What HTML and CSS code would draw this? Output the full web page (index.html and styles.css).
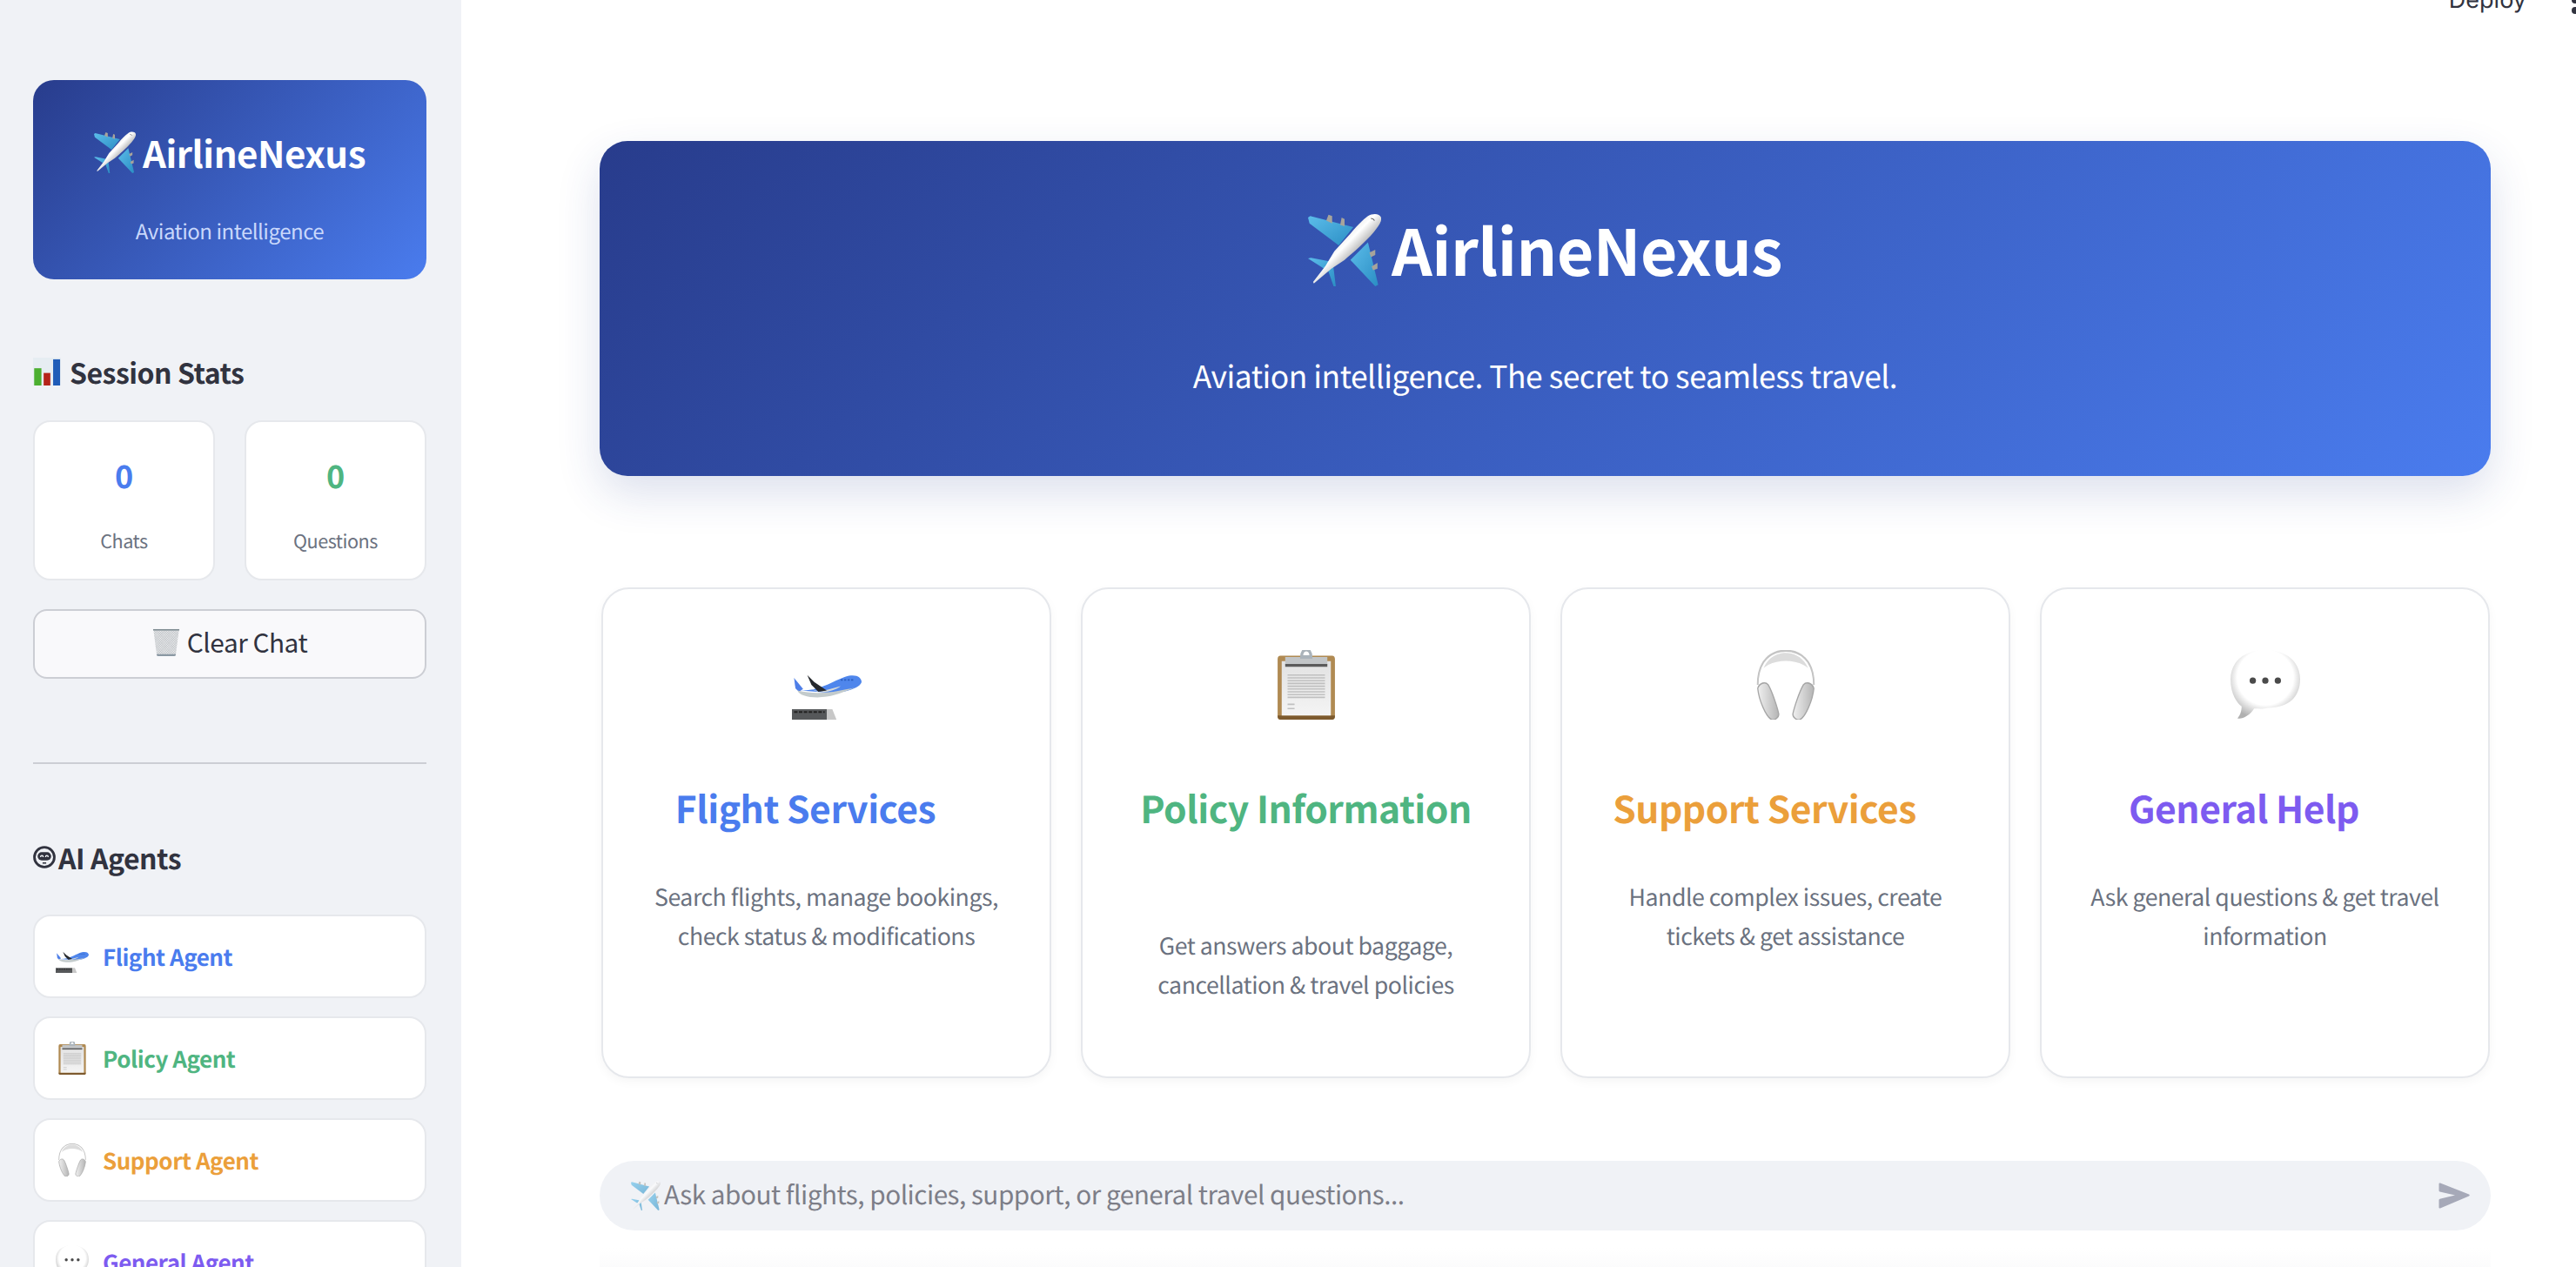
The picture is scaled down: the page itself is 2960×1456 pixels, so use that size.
FILE: index.html
```html
<!DOCTYPE html>
<html lang="en">
<head>
    <meta charset="UTF-8">
    <title>AirlineNexus</title>
    <link rel="stylesheet" href="styles.css">
</head>
<body>
    <!-- emoji drawings, reused below -->
    <svg class="defs" aria-hidden="true">
        <defs>
            <linearGradient id="silver" x1="0.3" y1="0.3" x2="0.7" y2="0.7">
                <stop offset="0" stop-color="#d8d8d8"/>
                <stop offset="0.4" stop-color="#ffffff"/>
                <stop offset="1" stop-color="#808080"/>
            </linearGradient>
            <linearGradient id="wing" x1="0" y1="0" x2="1" y2="1">
                <stop offset="0" stop-color="#5cbdea"/>
                <stop offset="1" stop-color="#2b8ec4"/>
            </linearGradient>
            <linearGradient id="ear" x1="0" y1="0" x2="1" y2="0">
                <stop offset="0" stop-color="#f0f0f0"/>
                <stop offset="1" stop-color="#b4b4b4"/>
            </linearGradient>
            <linearGradient id="paper" x1="0" y1="0" x2="0" y2="1">
                <stop offset="0" stop-color="#e2e2e2"/>
                <stop offset="1" stop-color="#f4f4f4"/>
            </linearGradient>
            <radialGradient id="bubble" cx="0.5" cy="0.4" r="0.62">
                <stop offset="0.65" stop-color="#ffffff"/>
                <stop offset="1" stop-color="#b0b0b0"/>
            </radialGradient>
            <pattern id="mesh" width="6" height="6" patternUnits="userSpaceOnUse" patternTransform="rotate(45)">
                <path d="M0 0H6M0 0V6" stroke="#8f959c" stroke-width="2" fill="none"/>
            </pattern>
        </defs>
        <symbol id="plane" viewBox="0 0 100 100">
            <path d="M0 6 3 4 62 19 42 44 2 14z" fill="url(#wing)"/>
            <path d="M82 40 96 98 92 100 58 64z" fill="url(#wing)"/>
            <path d="M0 62 4 61 30 66 22 76zM26 74 34 68 38 100 35 100z" fill="url(#wing)"/>
            <path d="M25 10 28 2 33 4 33 14zM44 16 46 6 50 8 50 18zM84 54 92 50 92 57 86 60zM87 73 95 68 95 76 89 78z" fill="#a7a49b"/>
            <path d="M100 6C98 0 88 0 82 4 74 10 66 18 58 28L36 52 24 72 7 94 8 96 32 76 50 64C62 54 78 40 90 26 96 18 101 12 100 6z" fill="url(#silver)"/>
            <path d="M86 7c2 0 4 1 5 3" stroke="#555" stroke-width="1.2" fill="none"/>
        </symbol>
        <symbol id="chart" viewBox="0 0 100 100">
            <path d="M0 0h100v100H0z" fill="#e6edf2"/>
            <path d="M4 38h26v62H4z" fill="#4caf30"/>
            <path d="M38 55h24v45H38z" fill="#b5241a"/>
            <path d="M72 6h25v94H72z" fill="#1f5cb8"/>
        </symbol>
        <symbol id="trash" viewBox="0 0 100 100">
            <path d="M4 5h92L84 96c-1 3-3 4-6 4H22c-3 0-5-1-6-4z" fill="#f2f3f4"/>
            <path d="M4 5h92L84 96c-1 3-3 4-6 4H22c-3 0-5-1-6-4z" fill="url(#mesh)"/>
            <path d="M3 3h94v5H3z" fill="#7f8c92"/>
            <path d="M15 93h70l-1 4c-1 2-3 3-6 3H22c-3 0-5-1-6-3z" fill="#8a98a3"/>
        </symbol>
        <symbol id="robot" viewBox="0 0 100 100">
            <circle cx="50" cy="50" r="44" fill="none" stroke="#31333f" stroke-width="11"/>
            <rect x="20" y="28" width="60" height="36" rx="18" fill="#31333f"/>
            <path d="M33 50c0-9 12-9 12 0M55 50c0-9 12-9 12 0" fill="none" stroke="#f0f2f6" stroke-width="5"/>
            <path d="M42 76h16" stroke="#31333f" stroke-width="6"/>
        </symbol>
        <symbol id="landing" viewBox="0 0 100 100">
            <path d="M3 40 16 56 10 60 5 55z" fill="#4f7fe8"/>
            <path d="M12 58C40 60 62 42 82 37 94 35 100 40 100 46 98 54 80 60 60 62z" fill="#4f86ec"/>
            <path d="M8 58C10 66 30 70 50 67 66 64 80 58 90 54 70 58 40 66 8 58z" fill="#c3cbcc"/>
            <path d="M28 56C40 64 60 60 70 52L40 60z" fill="#d4d8d8"/>
            <path d="M22 36 32 46 50 58 38 60 28 50z" fill="#26292d"/>
            <path d="M70 43h20" stroke="#2c5fc0" stroke-width="2" stroke-dasharray="3 2"/>
            <path d="M0 85h50v15H0z" fill="#56585a"/>
            <path d="M50 85h8l6 15H50z" fill="#c8c8c8"/>
            <path d="M3 89h44" stroke="#222" stroke-width="2.5" stroke-dasharray="5 2"/>
        </symbol>
        <symbol id="clipboard" viewBox="0 0 100 100">
            <g transform="translate(8 0) scale(.84 1)">
                <rect x="1" y="8" width="98" height="92" rx="5" fill="#b08a52"/>
                <path d="M1 94h98v1c0 3-2 5-5 5H6c-3 0-5-2-5-5z" fill="#7d5a2e"/>
                <path d="M8 16h84v78H8z" fill="url(#paper)"/>
                <path d="M18 36h64M18 40h64M18 44h64M18 48h64M18 52h64M18 56h64M18 60h64M18 64h64M18 68h64M18 78h12M18 84h12" stroke="#c0c0c0" stroke-width="2"/>
                <path d="M14 10h72v12H14z" fill="#c2c5c7"/>
                <path d="M14 20h72v4H14z" fill="#5b5b5b"/>
                <path d="M42 10c0-14 16-14 16 0z" fill="none" stroke="#aab3ba" stroke-width="5"/>
            </g>
        </symbol>
        <symbol id="headphones" viewBox="0 0 100 100">
            <g transform="translate(8 0) scale(.84 1)">
                <path d="M2 50C2 14 26 1 50 1s48 13 48 49" fill="none" stroke="#c4c4c4" stroke-width="3"/>
                <path d="M12 26C20 10 36 4 50 4s30 6 38 22C70 12 30 12 12 26z" fill="#dcdcdc"/>
                <path d="M2 55C5 47 15 45 20 50 28 62 36 84 38 92 38 98 30 101 26 100 16 96 4 72 2 55z" fill="url(#ear)" stroke="#a6a6a6" stroke-width="2"/>
                <path d="M98 55C95 47 85 45 80 50 72 62 64 84 62 92 62 98 70 101 74 100 84 96 96 72 98 55z" fill="url(#ear)" stroke="#a6a6a6" stroke-width="2"/>
            </g>
        </symbol>
        <symbol id="speech" viewBox="0 0 100 100">
            <path d="M50 0C18 0 0 18 0 42c0 22 10 35 16 39 0 6-2 13-6 17 6 2 18-4 24-14 6 0 12 1 20-1 30 0 46-16 46-41C100 18 82 0 50 0z" fill="url(#bubble)"/>
            <circle cx="32" cy="44" r="4.5" fill="#4a4a4a"/>
            <circle cx="50" cy="44" r="4.5" fill="#4a4a4a"/>
            <circle cx="68" cy="44" r="4.5" fill="#4a4a4a"/>
        </symbol>
    </svg>

    <div class="app">
        <!-- sidebar -->
        <aside class="sidebar">
            <div class="brand">
                <div class="brand-title"><svg class="brand-icon"><use href="#plane"/></svg>AirlineNexus</div>
                <p class="brand-sub">Aviation intelligence</p>
            </div>

            <h2 class="side-heading stats-heading"><svg class="chart-icon"><use href="#chart"/></svg>Session Stats</h2>
            <div class="stats">
                <div class="stat">
                    <div class="stat-num blue">0</div>
                    <div class="stat-label">Chats</div>
                </div>
                <div class="stat">
                    <div class="stat-num green">0</div>
                    <div class="stat-label">Questions</div>
                </div>
            </div>
            <button class="clear-btn"><svg class="trash-icon"><use href="#trash"/></svg>Clear Chat</button>

            <hr class="divider">

            <h2 class="side-heading agents-heading"><svg class="robot-icon"><use href="#robot"/></svg>AI Agents</h2>
            <div class="agents">
                <div class="agent blue"><svg class="agent-icon"><use href="#landing"/></svg>Flight Agent</div>
                <div class="agent green"><svg class="agent-icon"><use href="#clipboard"/></svg>Policy Agent</div>
                <div class="agent orange"><svg class="agent-icon"><use href="#headphones"/></svg>Support Agent</div>
                <div class="agent purple"><svg class="agent-icon"><use href="#speech"/></svg>General Agent</div>
            </div>
        </aside>

        <!-- main area -->
        <main class="main">
            <div class="topbar">
                <span class="deploy">Deploy</span>
                <span class="dots"><i></i><i></i><i></i></span>
            </div>

            <section class="hero">
                <h1 class="hero-title"><svg class="hero-icon"><use href="#plane"/></svg>AirlineNexus</h1>
                <p class="hero-sub">Aviation intelligence. The secret to seamless travel.</p>
            </section>

            <section class="cards">
                <div class="card">
                    <svg class="card-icon"><use href="#landing"/></svg>
                    <h3 class="card-title blue">Flight Services<span class="anchor"></span></h3>
                    <p class="card-text">Search flights, manage bookings, check status &amp; modifications</p>
                </div>
                <div class="card">
                    <svg class="card-icon"><use href="#clipboard"/></svg>
                    <h3 class="card-title green">Policy Information<span class="anchor"></span></h3>
                    <p class="card-text">Get answers about baggage, cancellation &amp; travel policies</p>
                </div>
                <div class="card">
                    <svg class="card-icon"><use href="#headphones"/></svg>
                    <h3 class="card-title orange">Support Services<span class="anchor"></span></h3>
                    <p class="card-text">Handle complex issues, create tickets &amp; get assistance</p>
                </div>
                <div class="card">
                    <svg class="card-icon"><use href="#speech"/></svg>
                    <h3 class="card-title purple">General Help<span class="anchor"></span></h3>
                    <p class="card-text">Ask general questions &amp; get travel information</p>
                </div>
            </section>

            <div class="chat-input">
                <svg class="input-icon"><use href="#plane"/></svg>
                <span class="placeholder">Ask about flights, policies, support, or general travel questions...</span>
                <svg class="send-icon" viewBox="0 0 36 32"><path d="M2 1.500 35 14.500c1 .6 1 1.400 0 2L2 30.500c-.8.300-1.500-.2-1.500-1V21c0-.7.4-1.100 1-1.300L19 15.500 1.500 11.500C.9 11.300.5 10.900.5 10.200V2.500C.5 1.700 1.200 1.200 2 1.500z"/></svg>
            </div>
            <div class="bottom-fade"></div>
        </main>
    </div>
</body>
</html>
```

FILE: styles.css
```css
html, body {
    margin: 0;
    padding: 0;
    height: 100%;
    overflow: hidden;
    background: #fff;
}

body {
    font-family: "Noto Sans CJK JP", "Source Sans Pro", sans-serif;
    letter-spacing: -0.03em; /* the CJK font's latin runs wider than the original */
    text-rendering: geometricPrecision;
    color: #31333f;
}

.defs {
    display: block;
    width: 0;
    height: 0;
}

.blue { color: #4a7cee; }
.green { color: #4fb581; }
.orange { color: #eb9f3b; }
.purple { color: #7d5bf0; }

.app {
    display: flex;
    height: 1456px;
    overflow: hidden;
}

/* sidebar */
.sidebar {
    flex: 0 0 530px;
    box-sizing: border-box;
    padding: 92px 40px 0 38px;
    background: #f0f2f6;
    overflow: hidden;
}

.brand {
    height: 229px;
    box-sizing: border-box;
    padding-top: 52px;
    border-radius: 24px;
    background: linear-gradient(135deg, #283c8c 0%, #4a7cee 100%);
    color: #fff;
    text-align: center;
}

.brand-title {
    font-size: 42px;
    line-height: 64px;
    font-weight: 700;
}

.brand-icon {
    width: 48px;
    height: 48px;
    margin-right: 8px;
    vertical-align: -6px;
}

.brand-sub {
    margin: 39px 0 0;
    font-size: 24px;
    line-height: 36px;
    color: #c9d8fb;
}

.side-heading {
    margin: 0;
    font-size: 32px;
    line-height: 50px;
    font-weight: 600;
}

.stats-heading {
    margin-top: 82px;
}

.chart-icon {
    width: 32px;
    height: 36px;
    margin-right: 10px;
    vertical-align: -4px;
}

.stats {
    display: grid;
    grid-template-columns: 1fr 1fr;
    gap: 34px;
    margin-top: 30px;
}

.stat {
    height: 184px;
    box-sizing: border-box;
    padding-top: 36px;
    background: #fff;
    border: 2px solid #e6e8ec;
    border-radius: 20px;
    text-align: center;
}

.stat-num {
    font-size: 36px;
    line-height: 50px;
    font-weight: 700;
}

.stat-label {
    margin-top: 34px;
    font-size: 21.6px;
    line-height: 34px;
    color: #6b7280;
}

.clear-btn {
    display: block;
    width: 100%;
    height: 80px;
    margin-top: 33px;
    padding: 0 0 6px;
    background: #f9f9fb;
    border: 2px solid #ccced4;
    border-radius: 16px;
    font-family: inherit;
    font-size: 29.8px;
    letter-spacing: inherit;
    color: #31333f;
}

.trash-icon {
    width: 32px;
    height: 32px;
    margin-right: 8px;
    vertical-align: -4px;
}

.divider {
    height: 2px;
    margin: 96px 0 0;
    border: 0;
    background: #ccced4;
}

.agents-heading {
    margin-top: 83px;
}

.robot-icon {
    width: 26px;
    height: 26px;
    margin-right: 3px;
    vertical-align: 1px;
}

.agents {
    display: flex;
    flex-direction: column;
    gap: 21px;
    margin-top: 40px;
}

.agent {
    display: flex;
    align-items: center;
    gap: 16px;
    height: 96px;
    box-sizing: border-box;
    flex: none;
    padding: 0 0 0 24px;
    background: #fff;
    border: 2px solid #e6e8ec;
    border-radius: 20px;
    font-size: 26px;
    font-weight: 600;
}

.agent-icon {
    width: 38px;
    height: 38px;
}

/* main */
.main {
    flex: 1;
    position: relative;
    min-width: 0;
    padding: 162px 98px 0 159px;
}

.topbar {
    position: absolute;
    top: -20px;
    right: -3px;
    display: flex;
    align-items: center;
    gap: 52px;
}

.deploy {
    font-size: 27px;
    line-height: 40px;
    font-family: "Inter", sans-serif;
    letter-spacing: 0;
}

.dots {
    display: flex;
    flex-direction: column;
    gap: 4px;
}

.dots i {
    display: block;
    width: 8px;
    height: 8px;
    border-radius: 50%;
    background: #31333f;
}

.hero {
    height: 385px;
    box-sizing: border-box;
    padding-top: 74px;
    border-radius: 32px;
    background: linear-gradient(135deg, #283c8c 0%, #4a7cee 100%);
    box-shadow: 0 20px 50px rgba(40, 60, 140, 0.16);
    color: #fff;
    text-align: center;
}

.hero-title {
    margin: 0;
    font-size: 73px;
    line-height: 100px;
    font-weight: 700;
}

.hero-icon {
    width: 84px;
    height: 84px;
    margin-right: 12px;
    vertical-align: -12px;
}

.hero-sub {
    margin: 69px 0 0;
    font-size: 35.4px;
    line-height: 54px;
}

.cards {
    display: grid;
    grid-template-columns: repeat(4, 1fr);
    gap: 34px;
    margin: 128px 1px 0 2px;
}

.card {
    height: 564px;
    box-sizing: border-box;
    padding: 70px 48px 0;
    background: #fff;
    border: 2px solid #e6e8ec;
    border-radius: 32px;
    box-shadow: 0 4px 12px rgba(0, 0, 0, 0.04);
    text-align: center;
}

.card-icon {
    display: block;
    width: 80px;
    height: 80px;
    margin: 0 auto;
}

.card-title {
    margin: 74px 0 0;
    font-size: 42.6px;
    line-height: 56px;
    font-weight: 600;
}

.anchor {
    display: inline-block;
    width: 48px;
}

.card-text {
    margin: 50px 0 0;
    font-size: 26.7px;
    line-height: 45px;
    color: #6b7280;
}

.chat-input {
    display: flex;
    align-items: center;
    height: 80px;
    margin-top: 95px;
    box-sizing: border-box;
    padding: 0 24px 0 36px;
    background: #f0f2f6;
    border-radius: 40px;
}

.input-icon {
    width: 34px;
    height: 34px;
    margin-right: 4px;
    opacity: 0.6;
}

.placeholder {
    flex: 1;
    padding-bottom: 6px;
    font-size: 29.7px;
    color: #7d7e88;
}

.send-icon {
    width: 36px;
    height: 32px;
    fill: #a6a9b8;
}

.bottom-fade {
    height: 30px;
    margin-top: 20px;
    background: linear-gradient(#fff, #fafafb);
}
```
